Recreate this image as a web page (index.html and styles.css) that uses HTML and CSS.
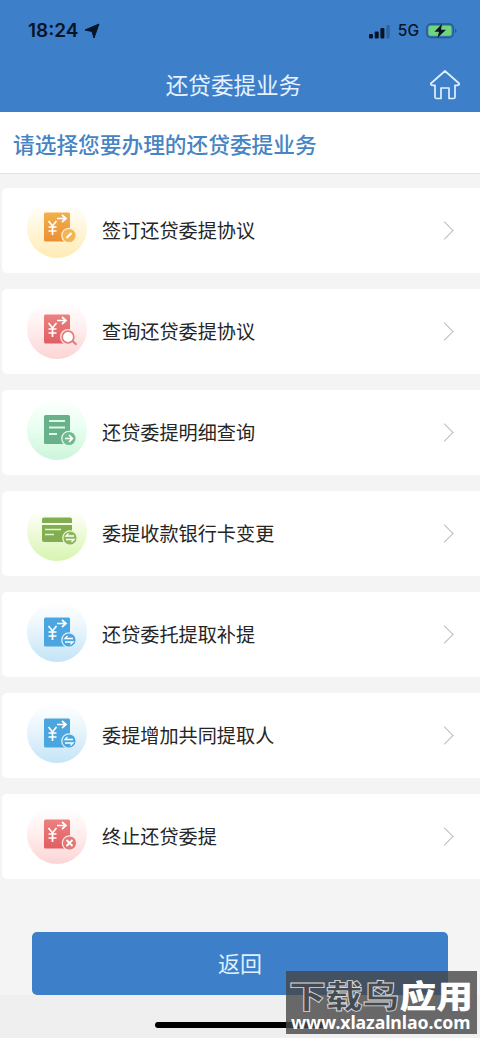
FILE: index.html
```html
<!DOCTYPE html>
<html lang="zh-CN">
<head>
<meta charset="utf-8">
<title>还贷委提业务</title>
<link rel="stylesheet" href="styles.css">
</head>
<body>
<svg class="defs" width="0" height="0" aria-hidden="true">
  <defs>
    <linearGradient id="orange" x1="0" y1="0" x2="0" y2="1"><stop stop-color="#f2b04b"/><stop offset="1" stop-color="#ec8f35"/></linearGradient>
    <linearGradient id="red" x1="0" y1="0" x2="0" y2="1"><stop stop-color="#ec8180"/><stop offset="1" stop-color="#e05e62"/></linearGradient>
    <g id="sheet">
      <rect x="17" y="15.500" width="26" height="29" rx="1.500"/>
      <g fill="none" stroke="#fff" stroke-width="1.700">
        <path d="M21.500 24l4 5 4-5M25.500 29v9M21.500 30h8M21.500 34h8"/>
        <path d="M30 21.500h8M35 18l4 3.500-4 3.500"/>
      </g>
    </g>
    <g id="swap" fill="none" stroke="#fff" stroke-width="1.300"><path d="M46 36.500h-8l2.500-2.500M38 40h8l-2.500 2.500"/></g>
  </defs>
</svg>
<header class="header">
  <div class="status">
    <span class="time">18:24</span>
    <svg class="locate" width="16" height="16" viewBox="0 0 16 16"><path d="M15 1L10 15 8 8.500 1 7Z" stroke="#071426" stroke-linejoin="round" fill="#071426"/></svg>
    <svg class="signal" width="22" height="15" viewBox="0 0 22 15"><g fill="#071426"><rect y="10" width="4" height="4.500" rx="1"/><rect x="5.700" y="7.500" width="4" height="7" rx="1"/><rect x="11.400" y="4" width="4" height="10.500" rx="1"/><rect x="17.300" y="1" width="3.500" height="13.500" rx="1" opacity=".25"/></g></svg>
    <span class="network">5G</span>
    <svg class="battery" width="32" height="16" viewBox="0 0 32 16"><rect x=".8" y="1" width="26.500" height="13.500" rx="4" fill="none" stroke="#235b84" stroke-width="1.400"/><rect x="2.500" y="2.700" width="23" height="10" rx="2" fill="#6fd47c"/><path d="M29 5.500q3 2.300 0 4.500z" fill="#235b84"/><path d="M16 .8L8.500 8.800h4.500l-1.500 6L20 6.800h-5z" fill="#071426"/></svg>
  </div>
  <div class="navbar">
    <h1>还贷委提业务</h1>
    <svg class="home" width="32" height="32" viewBox="0 0 32 32"><path d="M16 2L1.800 14.500q0 1.800 2 1.800H6V28q0 1.500 1.500 1.500H12V19h8v10.500h4.500Q26 29.500 26 28V16.300h2.200q2 0 2-1.800Z" fill="none" stroke="#e1f0ff" stroke-width="1.700" stroke-linejoin="round"/></svg>
  </div>
</header>
<h2 class="prompt">请选择您要办理的还贷委提业务</h2>
<main class="list">
  <a class="card"><svg class="icon icon-orange" viewBox="0 0 60 60"><use href="#sheet" y="-1" fill="url(#orange)"/><circle cx="42" cy="37.500" r="7.200" fill="#f3b552" stroke="#fff0c9" stroke-width="1.300"/><path d="M39.500 40l5-5" stroke="#fff" stroke-width="2.200"/></svg><span>签订还贷委提协议</span><i class="chevron"></i></a>
  <a class="card"><svg class="icon icon-red" viewBox="0 0 60 60"><use href="#sheet" fill="url(#red)"/><path d="M45 42l4.500 4" stroke="#fde2e2" stroke-width="4"/><circle cx="41" cy="38" r="8" fill="#fde2e2"/><circle cx="41" cy="38" r="5.800" fill="#fff" stroke="#e37a7b" stroke-width="1.700"/><path d="M45.500 42l4 3.700" stroke="#e37a7b" stroke-width="2"/></svg><span>查询还贷委提协议</span><i class="chevron"></i></a>
  <a class="card"><svg class="icon icon-green" viewBox="0 0 60 60"><rect x="17" y="15" width="26" height="29" rx="1.500" fill="#69b18a"/><path d="M22 21h16M22 27.500h16M22 34h8" stroke="#d9fae5" stroke-width="1.800"/><circle cx="42" cy="38.500" r="7.200" fill="#72b991" stroke="#ddf9e8" stroke-width="1.300"/><path d="M38 38.500h7M42 35l3.500 3.500L42 42" fill="none" stroke="#fff" stroke-width="1.700"/></svg><span>还贷委提明细查询</span><i class="chevron"></i></a>
  <a class="card"><svg class="icon icon-lime" viewBox="0 0 60 60"><path d="M15 22v-3.500q0-2 2-2h26q2 0 2 2V22zM15 24h30v17H17q-2 0-2-2z" fill="#82ae51"/><path d="M18 28.500h16M18 33.500h9" stroke="#e4f6cc" stroke-width="1.500"/><circle cx="43" cy="37" r="7.200" fill="#8db65f" stroke="#e7f7cf" stroke-width="1.300"/><use href="#swap" x="1" y="-1.500"/></svg><span>委提收款银行卡变更</span><i class="chevron"></i></a>
  <a class="card"><svg class="icon icon-blue" viewBox="0 0 60 60"><use href="#sheet" fill="#4ba6df"/><circle cx="42" cy="38" r="7.200" fill="#4ba6df" stroke="#d9effc" stroke-width="1.300"/><use href="#swap"/></svg><span>还贷委托提取补提</span><i class="chevron"></i></a>
  <a class="card"><svg class="icon icon-blue" viewBox="0 0 60 60"><use href="#sheet" fill="#4ba6df"/><circle cx="42" cy="38" r="7.200" fill="#4ba6df" stroke="#d9effc" stroke-width="1.300"/><use href="#swap"/></svg><span>委提增加共同提取人</span><i class="chevron"></i></a>
  <a class="card"><svg class="icon icon-red" viewBox="0 0 60 60"><use href="#sheet" fill="url(#red)"/><circle cx="42.500" cy="39" r="7.200" fill="#df7b77" stroke="#fde5e4" stroke-width="1.300"/><path d="M39.500 36l6 6m0-6l-6 6" stroke="#fff" stroke-width="1.800"/></svg><span>终止还贷委提</span><i class="chevron"></i></a>
</main>
<div class="actions"><button class="back">返回</button></div>
<footer class="footer"><div class="home-bar"></div></footer>
<div class="watermark">
  <div class="mark-name"><span class="mark-dark">下载鸟</span><span>应用</span></div>
  <div class="mark-url">www.xlazalnlao.com</div>
</div>
</body>
</html>
```

FILE: styles.css
```css
* { box-sizing: border-box; }
body {
  margin: 0;
  width: 480px;
  height: 1038px;
  overflow: hidden;
  position: relative;
  display: flex;
  flex-direction: column;
  background: #f4f4f4;
  font-family: "Liberation Sans", "Noto Sans CJK SC", sans-serif;
}
.defs { position: absolute; }
.header { height: 112px; background: #3e7fca; flex: none; }
.status { height: 60px; padding: 2px 22px 0 28px; display: flex; align-items: center; color: #071426; }
.time { font: 600 19px/24px Inter, sans-serif; width: 51px; white-space: nowrap; }
.locate { margin-left: 5px; }
.signal { margin-left: auto; margin-right: -1px; }
.network { font: 500 15.500px/20px Inter, sans-serif; margin: 0 7px 0 8px; }
.navbar { height: 52px; display: grid; grid-template-columns: 60px 1fr 60px; align-items: center; }
.navbar h1 { grid-column: 2; margin: 0 15px 0 0; padding-top: 1px; text-align: center; color: #e6f3ff; font-size: 22.600px; font-weight: 400; line-height: 32px; }
.navbar h1 { margin-right: 13px; }
.home { margin: 0 0 2px 9px; }
.prompt { height: 62px; flex: none; margin: 0; padding: 2px 13px 0; background: #fff; border-bottom: 1px solid #e3e3e3; color: #4684c4; font-size: 21.700px; font-weight: 500; line-height: 63px; }
.list { margin: 14px 0 0 2px; display: flex; flex-direction: column; gap: 16px; }
.card { height: 85px; display: flex; align-items: center; background: #fff; border-radius: 5px 0 0 5px; padding: 0 29px 0 25px; color: #252525; font-size: 19.150px; line-height: 28px; }
.card span { padding-top: 3px; }
.icon { width: 60px; height: 60px; border-radius: 50%; margin: -5px 15px 0 0; }
.icon-orange { background: linear-gradient(#fff 12%, #fff8df 45%, #ffebb5); }
.icon-red { background: linear-gradient(#fff 8%, #fff0f0 45%, #fcd5d5); }
.icon-green { background: linear-gradient(#fafffc 8%, #e9fff1 45%, #ccf5da); }
.icon-lime { background: linear-gradient(#fff 15%, #f0fbdc 50%, #d8f4b0); }
.icon-blue { background: linear-gradient(#fcfeff 8%, #e8f5fc 45%, #c4e4f6); }
.chevron { margin-left: auto; width: 13px; height: 13px; border-top: 1.500px solid #bdbdbd; border-right: 1.500px solid #bdbdbd; transform: rotate(45deg); }
.actions { padding: 53px 32px 0; }
.back { display: block; width: 416px; height: 63px; padding: 3px 0 0; border: 0; border-radius: 5px; background: #3e7fca; color: #dff0ff; font: 22px/60px "Liberation Sans", "Noto Sans CJK SC", sans-serif; }
.footer { flex: 1; background: #efefef; padding-top: 27px; }
.home-bar { width: 170px; height: 6px; margin: 0 auto; border-radius: 3px; background: #000; }
.watermark { position: absolute; left: 286px; top: 971px; width: 191px; height: 63px; background: rgba(70, 70, 70, .8); color: #fff; white-space: nowrap; }
.mark-name { height: 39px; padding-left: 3px; font: 900 36.800px/39px "Noto Sans CJK SC", sans-serif; padding-top: 4px; }
.mark-name span { display: inline-block; line-height: 39px; transform: scaleY(.86); }
.mark-dark { color: #464b52; -webkit-text-stroke: 1px #d7d7d7; }
.mark-url { font: 700 17.700px/24px "Noto Sans", sans-serif; padding-left: 5px; letter-spacing: -.1px; }
```
